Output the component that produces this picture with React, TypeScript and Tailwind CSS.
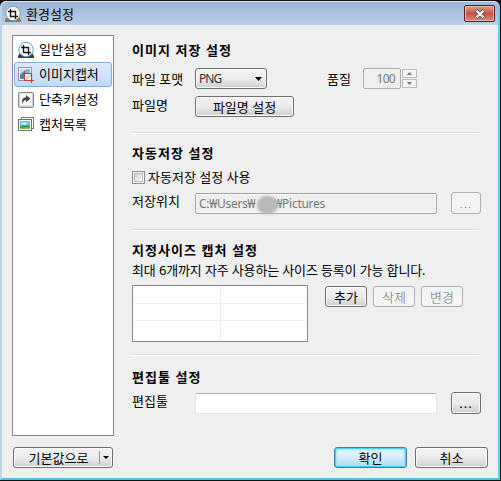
import React from 'react';
import clsx from 'clsx';

type IconProps = { className?: string };

function CropLogo({ className }: IconProps) {
  return (
    <svg viewBox="0 0 16 16" className={clsx('h-4 w-4 shrink-0', className)}>
      <path d="M0 16v-2l2-3h12l2 3v2z" fill="currentColor" />
      <circle cx="8" cy="7.5" r="7.2" fill="#fff" stroke="#5b9fce" />
      <path d="M5.5 3v7.5H13M3 5.500h7.500V13" fill="none" stroke="#151515" strokeWidth="1.4" />
    </svg>
  );
}

function CaptureIcon() {
  return (
    <svg viewBox="0 0 16 16" className="h-4 w-4 shrink-0">
      <rect x="0.5" y="0.5" width="13" height="13" fill="#fff" stroke="#8c9299" />
      <rect x="2" y="2" width="10" height="10" fill="#7fb2e0" />
      <path d="M2 12V8l4-3 3 3v4z" fill="#4c86c0" />
      <path d="M2 2h7L2 7z" fill="#b9d8f2" />
      <path d="M7 7h6.5v6.5H7z" fill="#f8efed" />
      <path d="M6.5 4v9.500H16M4 6.500h9.500V16" fill="none" stroke="#bd4434" strokeWidth="1.2" />
      <path d="M7 13.500l6.500-6.500" stroke="#cf7468" strokeWidth="0.7" />
    </svg>
  );
}

function ShortcutIcon() {
  return (
    <svg viewBox="0 0 16 16" className="h-4 w-4 shrink-0">
      <rect x="0.5" y="0.5" width="15" height="15" rx="1" fill="#d2d2d2" stroke="#858585" />
      <rect x="2" y="1.5" width="12" height="12" rx="1" fill="#f8f8f8" />
      <path d="M5 12.500c-2-4-.2-7.300 3-7.300V3l4.500 3.700L8 10.300V8C5.800 8 4.700 9.500 5 12.500z" fill="#3b4650" />
    </svg>
  );
}

function ListIcon() {
  return (
    <svg viewBox="0 0 16 16" className="h-4 w-4 shrink-0">
      <rect x="3.5" y="0.5" width="12" height="11" fill="#fff" stroke="#777" />
      <rect x="0.5" y="2.5" width="13" height="11" fill="#fff" stroke="#68727a" />
      <rect x="2" y="4" width="10" height="8" fill="#74b8ef" />
      <ellipse cx="6" cy="6.5" rx="3" ry="1.2" fill="#d9effc" />
      <path d="M2 9.500c4-2 7 0 10-1V12H2z" fill="#39982f" />
      <path d="M2 11c4-1.500 7 0 10-1v2H2z" fill="#7ac143" />
    </svg>
  );
}

const menu = [
  { label: '일반설정', icon: <CropLogo className="text-[#33414e]" /> },
  { label: '이미지캡처', icon: <CaptureIcon />, active: true },
  { label: '단축키설정', icon: <ShortcutIcon /> },
  { label: '캡처목록', icon: <ListIcon /> },
];

interface ButtonProps {
  children: React.ReactNode;
  className?: string;
  variant?: 'normal' | 'disabled' | 'primary';
}

function Button({ children, className, variant = 'normal' }: ButtonProps) {
  return (
    <button
      type="button"
      disabled={variant === 'disabled'}
      className={clsx(
        'flex h-[21px] shrink-0 items-center justify-center rounded-[3px] border whitespace-nowrap',
        variant === 'normal' &&
          'border-[#707070] bg-linear-to-b from-[#f3f3f3] from-0% via-[#ebebeb] via-50% to-[#cfcfcf] shadow-[inset_0_0_0_1px_#fbfbfb]',
        variant === 'disabled' && 'border-[#adb2b5] bg-[#f4f4f4] font-light text-[#707070]',
        variant === 'primary' &&
          'border-[#3c7fb1] bg-linear-to-b from-[#e8f5fc] via-[#d5edfa] to-[#a9d9f2] shadow-[inset_0_0_0_1px_#46d0f8,inset_0_0_2px_2px_#9ee6fb]',
        className,
      )}
    >
      {children}
    </button>
  );
}

function Title({ children }: { children: React.ReactNode }) {
  return <h2 className="h-5 text-[13px] leading-5 font-bold tracking-[1.05px] whitespace-nowrap">{children}</h2>;
}

function Divider() {
  return <hr className="h-[2px] w-[347px] border-t border-b border-t-[#dcdcdc] border-b-white" />;
}

export default function App() {
  return (
    <div className="flex h-[481px] w-[501px] overflow-hidden bg-[#17110f] pt-px pr-px pb-px font-['Noto_Sans','Noto_Sans_CJK_KR',sans-serif] text-[13px] leading-5 text-black">
      <div className="flex flex-1 flex-col rounded-t-[6px] border-r-2 border-b-2 border-l-2 border-r-[#62cdee] border-b-[#55bfdf] border-l-[#b9d5ea] bg-[#efefef]">
        {/* Title bar */}
        <header className="flex h-6 shrink-0 items-start justify-between rounded-t-[5px] border-t border-t-[#d5e3f0] bg-linear-to-b from-[#9bb6d4] to-[#b9cfe7] pr-[3px] pl-[3px]">
          <div className="flex items-center pt-[3px]">
            <CropLogo className="text-[#99733a]" />
            <span className="ml-[5px] leading-[18px]">환경설정</span>
          </div>
          <button
            type="button"
            className="mt-[3px] flex h-[17px] w-[31px] items-center justify-center rounded-[2px] border border-[#571f24] bg-linear-to-b from-[#dea193] via-[#c95343] via-50% to-[#d68b74] shadow-[inset_0_0_0_1px_#e9b5a8]"
          >
            <svg viewBox="0 0 12 10" className="h-[10px] w-3">
              <path d="M2 1.500l8 7M10 1.500l-8 7" stroke="#53536a" strokeWidth="4" />
              <path d="M2.400 1.700l7.200 6.600M9.600 1.700L2.400 8.300" stroke="#fff" strokeWidth="2.2" />
            </svg>
          </button>
        </header>

        <div className="flex flex-1 pt-[10px] pl-[10px]">
          {/* Sidebar */}
          <div className="flex w-[102px] shrink-0 flex-col">
            <nav className="h-[401px] border border-[#828790] bg-white p-px">
              {menu.map((item) => (
                <div
                  key={item.label}
                  className={clsx(
                    'flex h-[25px] items-center gap-[5px] rounded-[3px] border pl-[3px] whitespace-nowrap',
                    item.active
                      ? 'border-[#84acdd] bg-linear-to-b from-[#dcebfc] to-[#c1dbfc]'
                      : 'border-transparent',
                  )}
                >
                  {item.icon}
                  <span className="-mt-px">{item.label}</span>
                </div>
              ))}
            </nav>
            <Button className="mt-[11px] ml-px w-[100px] pl-1">
              <span className="flex-1 text-center">기본값으로</span>
              <span className="h-[13px] w-px bg-[#999]" />
              <svg viewBox="0 0 6 3" className="mr-[3px] ml-[3px] h-[3px] w-[6px]">
                <path d="M0 0h6L3 3z" />
              </svg>
            </Button>
          </div>

          {/* Settings */}
          <main className="ml-[18px] flex w-[356px] flex-col pt-[5px]">
            <section className="h-[92px]">
              <Title>이미지 저장 설정</Title>
              <div className="mt-[8px] flex h-[21px] items-center">
                <span className="w-[63px]">파일 포맷</span>
                <Button className="w-[72px] px-[3px] text-[12px] tracking-[-0.9px]">
                  <span className="flex-1 text-left text-[#333]">PNG</span>
                  <svg viewBox="0 0 7 4" className="mr-px h-1 w-[7px]">
                    <path d="M0 0h7L3.500 4z" />
                  </svg>
                </Button>
                <span className="ml-[60px] w-[36px]">품질</span>
                <div className="flex h-[21px] w-[38px] items-center justify-end rounded-[2px] border border-[#afafaf] pr-[5px] text-[12px] tracking-[-0.7px] text-[#777]">
                  100
                </div>
                <div className="ml-px flex flex-col gap-px">
                  {['M0 3h5L2.500 0z', 'M0 0h5L2.500 3z'].map((d) => (
                    <span key={d} className="flex h-[9px] w-[15px] items-center justify-center border border-[#bdbdbd] bg-[#f4f4f4]">
                      <svg viewBox="0 0 5 3" className="h-[3px] w-[5px]">
                        <path d={d} fill="#777" />
                      </svg>
                    </span>
                  ))}
                </div>
              </div>
              <div className="mt-[7px] flex h-[21px] items-center">
                <span className="w-[63px] pb-[4px]">파일명</span>
                <Button className="w-[99px]">파일명 설정</Button>
              </div>
            </section>
            <Divider />

            <section className="h-[95px] pt-[9px]">
              <Title>자동저장 설정</Title>
              <label className="mt-[4px] flex h-5 items-center gap-[3px]">
                <span className="flex h-[13px] w-[13px] items-center justify-center border border-[#8e8f8f] bg-[#f4f4f4]">
                  <span className="h-[9px] w-[9px] border border-[#b9bec3] bg-linear-to-br from-[#cdd0d4] to-[#f8f8f8]" />
                </span>
                자동저장 설정 사용
              </label>
              <div className="mt-[5px] flex h-[22px] items-center">
                <span className="w-[63px] pb-[4px]">저장위치</span>
                <div className="relative h-[21px] w-[242px] rounded-[2px] border border-[#a5a5a5] pl-[3px] text-[12px] leading-[19px] tracking-[-0.28px] whitespace-pre text-[#777] shadow-[inset_0_0_0_1px_#f8f8f8]">
                  C:₩Users₩<span className="inline-block w-[19px]" />₩Pictures
                  <span className="absolute top-[2px] left-[61px] h-[18px] w-[21px] rounded-full bg-[#b9b9b9] blur-[1px]" />
                </div>
                <Button variant="disabled" className="ml-[14px] h-[22px] w-[30px] tracking-[1px]">...</Button>
              </div>
            </section>
            <Divider />

            <section className="h-[123px] pt-[9px]">
              <Title>지정사이즈 캡처 설정</Title>
              <p className="tracking-[-0.14px] whitespace-nowrap">최대 6개까지 자주 사용하는 사이즈 등록이 가능 합니다.</p>
              <div className="mt-[5px] flex">
                <div className="grid h-[57px] w-[176px] grid-cols-[87px_1fr] grid-rows-[18px_17px_1fr] border border-[#828790] bg-white px-px">
                  {[0, 1, 2, 3, 4, 5].map((i) => (
                    <span
                      key={i}
                      className={clsx('border-[#ececec]', i % 2 === 0 && 'border-r', i < 4 && 'border-b')}
                    />
                  ))}
                </div>
                <div className="mt-px ml-[17px] flex gap-[6px]">
                  <Button className="w-[42px]">추가</Button>
                  <Button variant="disabled" className="w-[42px]">삭제</Button>
                  <Button variant="disabled" className="w-[42px]">변경</Button>
                </div>
              </div>
            </section>
            <Divider />

            <section className="h-[91px] pt-[11px]">
              <Title>편집툴 설정</Title>
              <div className="mt-[5px] flex h-[22px] items-center">
                <span className="w-[63px] pb-[4px]">편집툴</span>
                <div className="h-[21px] w-[242px] rounded-[2px] border border-[#e3e3e3] border-t-[#abadb3] bg-white" />
                <Button className="ml-[14px] h-[22px] w-[30px] tracking-[1px]">...</Button>
              </div>
            </section>
            <footer className="flex justify-end gap-[8px]">
              <Button variant="primary" className="w-[73px]">확인</Button>
              <Button className="w-[73px]">취소</Button>
            </footer>
          </main>
        </div>
      </div>
    </div>
  );
}
